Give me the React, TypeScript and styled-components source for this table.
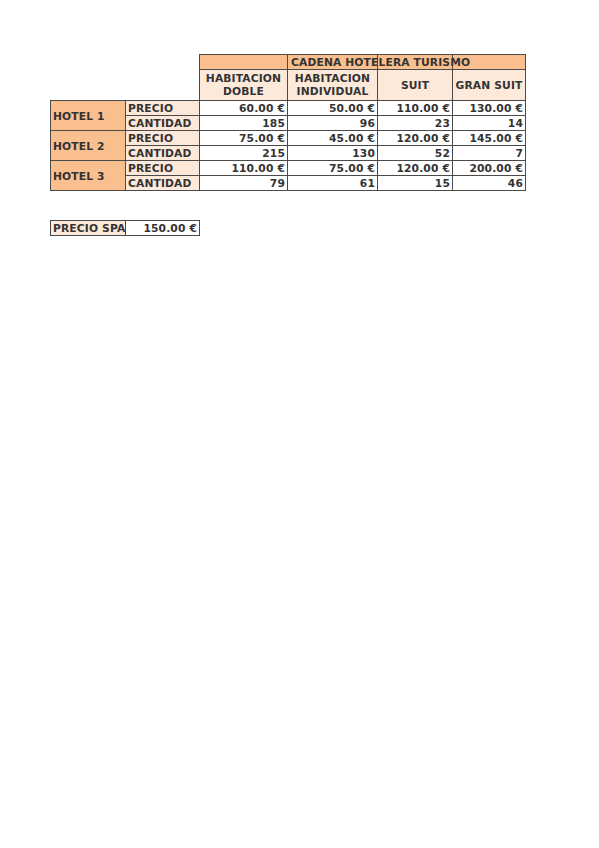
import styled, { createGlobalStyle } from "styled-components";

const ORANGE = "#f9bf8f";
const PEACH = "#fde9d9";
const LINE = "#4a4a4a";

type Hotel = {
  name: string;
  prices: string[];
  amounts: number[];
};

const hotels: Hotel[] = [
  { name: "HOTEL 1", prices: ["60.00 €", "50.00 €", "110.00 €", "130.00 €"], amounts: [185, 96, 23, 14] },
  { name: "HOTEL 2", prices: ["75.00 €", "45.00 €", "120.00 €", "145.00 €"], amounts: [215, 130, 52, 7] },
  { name: "HOTEL 3", prices: ["110.00 €", "75.00 €", "120.00 €", "200.00 €"], amounts: [79, 61, 15, 46] },
];

const rooms = [["HABITACION", "DOBLE"], ["HABITACION", "INDIVIDUAL"], ["SUIT"], ["GRAN SUIT"]];

function App() {
  return (
    <>
      <GlobalStyle />
      <Page>
        <Sheet>
          <colgroup>
            <col style={{ width: 75 }} />
            <col style={{ width: 74 }} />
            <col style={{ width: 88 }} />
            <col style={{ width: 90 }} />
            <col style={{ width: 75 }} />
            <col style={{ width: 73 }} />
          </colgroup>
          <tbody>
            <tr>
              <Blank />
              <Blank />
              <Title />
              <Title>
                <Overflow>CADENA HOTELERA TURISMO</Overflow>
              </Title>
              <Title />
              <Title />
            </tr>
            <tr>
              <Blank />
              <Blank />
              {rooms.map((lines, i) => (
                <Head key={i}>
                  {lines.map((l) => (
                    <div key={l}>{l}</div>
                  ))}
                </Head>
              ))}
            </tr>
            {hotels.map((h) => (
              <>
                <tr key={h.name + "p"}>
                  <HotelCell rowSpan={2}>{h.name}</HotelCell>
                  <Label>PRECIO</Label>
                  {h.prices.map((p, i) => (
                    <Value key={i}>{p}</Value>
                  ))}
                </tr>
                <tr key={h.name + "c"}>
                  <Label>CANTIDAD</Label>
                  {h.amounts.map((a, i) => (
                    <Value key={i}>{a}</Value>
                  ))}
                </tr>
              </>
            ))}
          </tbody>
        </Sheet>

        <Spa>
          <colgroup>
            <col style={{ width: 75 }} />
            <col style={{ width: 74 }} />
          </colgroup>
          <tbody>
            <tr>
              <Label>PRECIO SPA</Label>
              <Value>150.00 €</Value>
            </tr>
          </tbody>
        </Spa>
      </Page>
    </>
  );
}

export default App;

const GlobalStyle = createGlobalStyle`
  body {
    margin: 0;
    background: #ffffff;
    font-family: "DejaVu Sans", "Liberation Sans", sans-serif;
    color: #333333;
  }
`;

const Page = styled.div`
  padding: 54px 0 0 50px;
`;

const Sheet = styled.table`
  border-collapse: collapse;
  table-layout: fixed;
  width: 476px;
  font-size: 10.7px;
  font-weight: bold;
  letter-spacing: 0.15px;

  td {
    padding: 1px 2px 0;
    height: 13px;
    line-height: 13px;
    white-space: nowrap;
    overflow: visible;
  }
`;

const Spa = styled(Sheet)`
  width: 150px;
  margin-top: 29px;
`;

const Blank = styled.td`
  border: none;
`;

const Title = styled.td`
  background: ${ORANGE};
  border: 1px solid ${LINE};
`;

const Overflow = styled.span`
  padding-left: 1px;
`;

const Head = styled.td`
  background: ${PEACH};
  border: 1px solid ${LINE};
  text-align: center;
  vertical-align: middle;

  && {
    padding: 0 2px;
    height: 30px;
    line-height: 13px;
  }
`;

const HotelCell = styled.td`
  background: ${ORANGE};
  border: 1px solid ${LINE};
  vertical-align: middle;
`;

const Label = styled.td`
  background: ${PEACH};
  border: 1px solid ${LINE};
`;

const Value = styled.td`
  background: #ffffff;
  border: 1px solid ${LINE};
  text-align: right;
`;
